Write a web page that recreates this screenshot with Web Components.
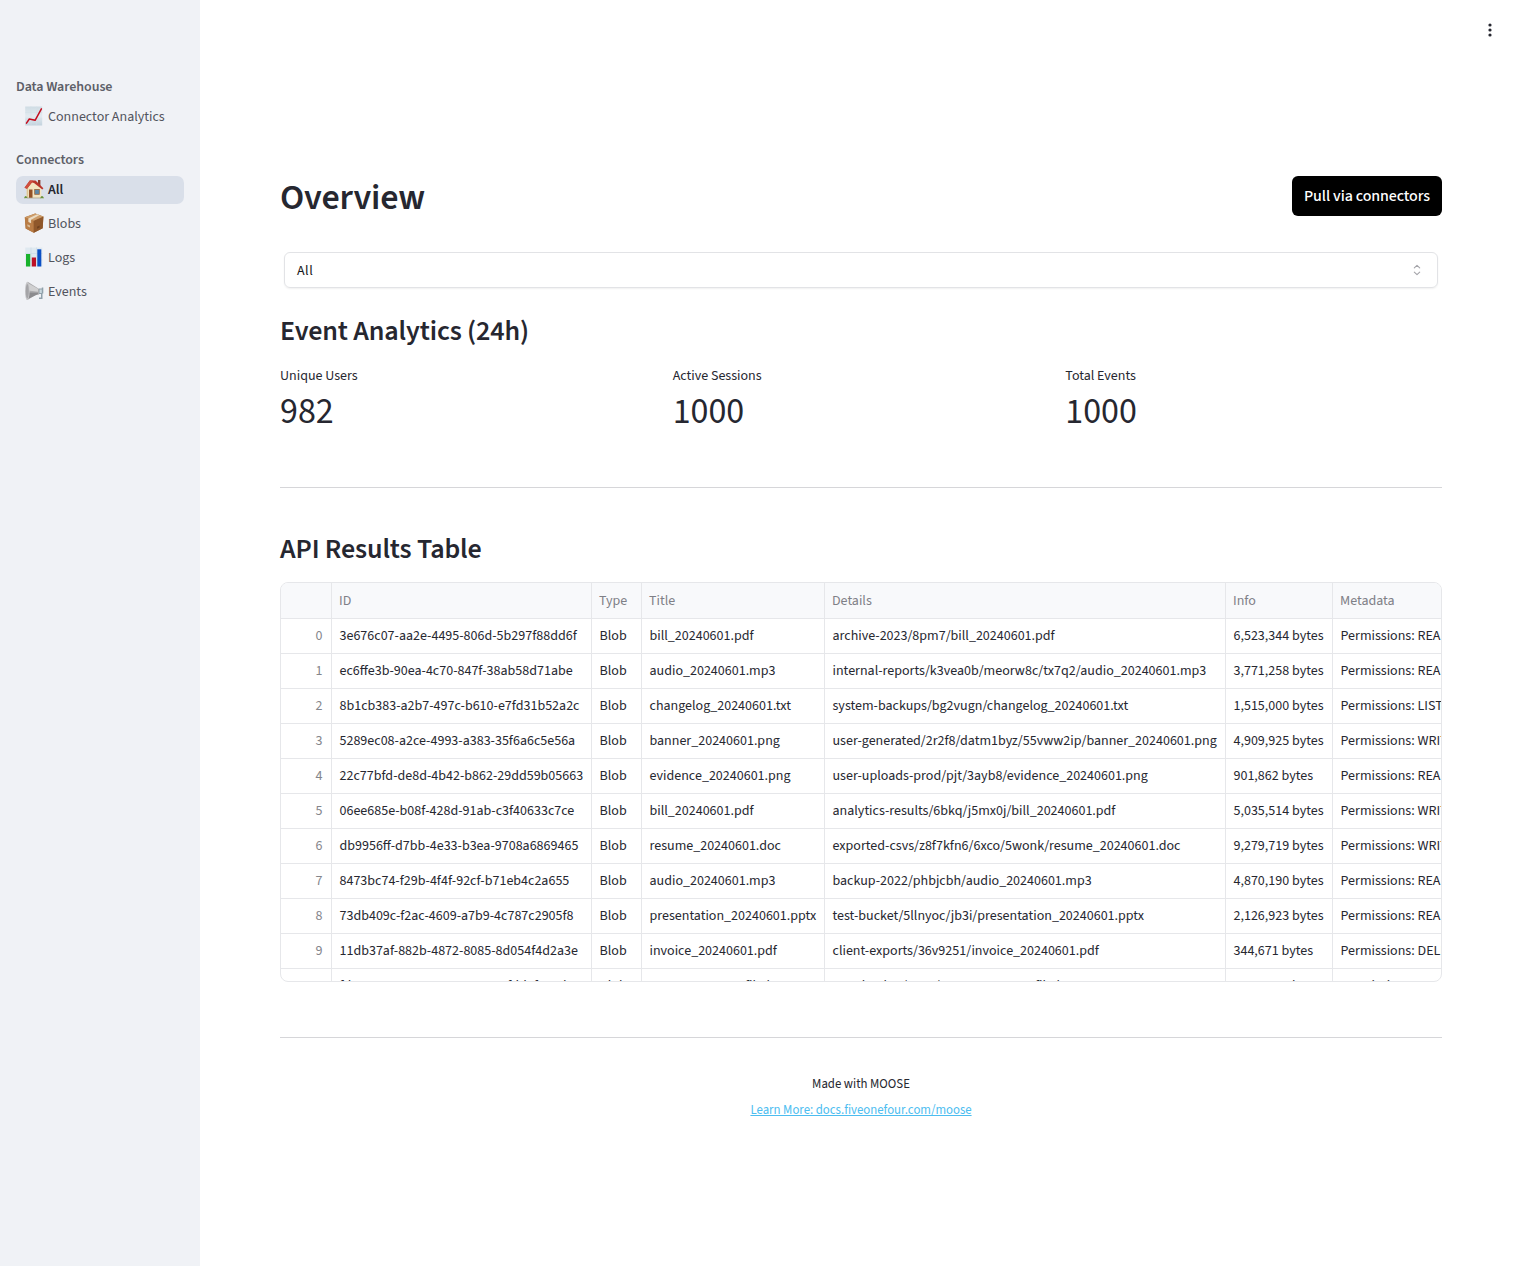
<!DOCTYPE html>
<html lang="en">
<head>
<meta charset="utf-8">
<title>Overview</title>
<style>
body{margin:0;background:#fff;color:#262730;font-family:"Source Sans Pro","Source Sans 3","Noto Sans CJK SC","Noto Sans",sans-serif;font-size:14px;line-height:20px}
</style>
</head>
<body>
<app-shell>
  <nav-sidebar slot="side">
    <nav-group label="Data Warehouse">
      <nav-item icon="chart">Connector Analytics</nav-item>
    </nav-group>
    <nav-group label="Connectors">
      <nav-item icon="house" active>All</nav-item>
      <nav-item icon="box">Blobs</nav-item>
      <nav-item icon="bars">Logs</nav-item>
      <nav-item icon="horn">Events</nav-item>
    </nav-group>
  </nav-sidebar>
  <kebab-menu slot="tool"></kebab-menu>
  <page-head>Overview<action-button slot="action">Pull via connectors</action-button></page-head>
  <select-box>All</select-box>
  <section-title style="--top:25px">Event Analytics (24h)</section-title>
  <metric-row>
    <metric-card label="Unique Users">982</metric-card>
    <metric-card label="Active Sessions">1000</metric-card>
    <metric-card label="Total Events">1000</metric-card>
  </metric-row>
  <rule-line style="--top:51px"></rule-line>
  <section-title style="--top:43px">API Results Table</section-title>
  <data-grid></data-grid>
  <rule-line style="--top:55px"></rule-line>
  <page-foot>Made with MOOSE<a slot="link">Learn More: docs.fiveonefour.com/moose</a></page-foot>
</app-shell>
<script>
const define = (name, html, setup) => customElements.define(name, class extends HTMLElement {
  constructor() {
    super();
    this.attachShadow({ mode: 'open' }).innerHTML = html;
  }
  connectedCallback() { if (setup) setup(this, this.shadowRoot); }
});

define('app-shell', `<style>
:host{display:flex;min-height:1266px}
aside{width:200px;flex:none;background:#f0f2f6;display:flex}
.right{flex:1;min-width:0;display:flex;flex-direction:column}
header{height:60px;display:flex;justify-content:flex-end;align-items:center;padding-right:22px}
main{padding:116px 80px 0;display:flex;flex-direction:column}
</style><aside><slot name="side"></slot></aside><div class="right"><header><slot name="tool"></slot></header><main><slot></slot></main></div>`);

define('kebab-menu', `<style>:host{display:block;width:20px;height:20px}svg{display:block}</style>
<svg width="20" height="20" viewBox="0 0 20 20" fill="#262730"><circle cx="10" cy="5" r="1.600"/><circle cx="10" cy="10" r="1.600"/><circle cx="10" cy="15" r="1.600"/></svg>`);

define('nav-sidebar', `<style>:host{display:flex;flex-direction:column;gap:18px;flex:1;padding:76px 16px 0}</style><slot></slot>`);

define('nav-group', `<style>
:host{display:flex;flex-direction:column}
.label{height:20px;line-height:22px;margin-bottom:7px;font-weight:600;letter-spacing:-.07px;color:#5d5f68}
.items{display:flex;flex-direction:column;gap:6px}
</style><div class="label"></div><div class="items"><slot></slot></div>`, (el, root) => {
  root.querySelector('.label').textContent = el.getAttribute('label');
});

const icons = {
  chart: `<defs><linearGradient id="g" x2="0" y2="1"><stop stop-color="#cfdce4"/><stop offset=".5" stop-color="#e3ebf0"/><stop offset="1" stop-color="#c3d3de"/></linearGradient></defs><rect x="1.2" y=".5" width="17" height="19" fill="url(#g)"/><path d="M7 .5v19M12.700 .5v19M1.200 6.500h17M1.200 13h17" stroke="#d3dfe7" stroke-width=".6"/><path d="M2.500 17.200L5.300 13l5.800 1.300 6.300-11.400" fill="none" stroke="#c40d1e" stroke-width="1.500" stroke-linejoin="round" stroke-linecap="round"/>`,
  house: `<path d="M14 1h2.400v6.500H14z" fill="#8b3a2b"/><path d="M2.700 8l4-5.500 5.300 0L17.300 9v10H2.700z" fill="#f3e4c0"/><path d="M2.700 8.500l1.500-1.500v12H2.700z" fill="#dcc594"/><path d="M.5 8.800L5.800 1.500h5.700l7.900 7.800-1.100 1.200-8.300-6.500L8 3.500 3 9.800z" fill="#b9352a"/><path d="M.5 8.800L5.800 1.500h3.400L3 9.800z" fill="#cf4f3e"/><rect x="5" y="10.500" width="3.500" height="8.500" fill="#935127"/><rect x="10.700" y="10.500" width="4.600" height="4.800" fill="#5c88a8" stroke="#9a6238" stroke-width=".8"/><path d="M0 19.200q1.600-4 3.500-.3zM16 19.200q2-4.600 4 0z" fill="#689239"/><path d="M2.700 18.600h14v.8h-14z" fill="#a9a28c"/>`,
  box: `<path d="M.8 4.300L11.200.4l8.200 3.100-.7 11.700-8.900 4.500-8.100-4.100z" fill="#a46a38"/><path d="M.8 4.300l8.900 3.400.1 12-8.100-4.100z" fill="#b97c45"/><path d="M9.700 7.700l9.700-4.200-.7 11.700-8.900 4.500z" fill="#8f572a"/><path d="M.8 4.300L11.200.4l8.200 3.100-9.700 4.200z" fill="#cc9b68"/><path d="M4.300 5.600l9-4.400 2.300.9-8.500 4.600v3.500l-2.700-1.200z" fill="#eadbc2"/><path d="M3.400 11.200l2.600 1.200v2.200l-2.600-1.300z" fill="#d9bc97"/><path d="M13 13.800l2.600-1.200v1.900l-2.600 1.200z" fill="#70411f"/>`,
  bars: `<rect x="1.300" y=".5" width="17" height="19" fill="#dfe9f0"/><path d="M1.300 6.500h17M1.300 13h17M7 .5v19M12.500 .5v19" stroke="#c9d9e4" stroke-width=".6"/><rect x="2" y="7" width="4.200" height="12.500" fill="#19b22c"/><rect x="7.800" y="10.500" width="4.200" height="9" fill="#bd1025"/><rect x="13.300" y="2.300" width="4" height="17.200" fill="#0b50c5"/>`,
  horn: `<path d="M14.800 7.500h3v-1h1.500v6h-.8v5.500h-3.500v-1.500h2v-3.500h-2.200z" fill="#8fa0aa"/><path d="M15.500 8.500h2.300v3.500h-2.300z" fill="#c9d8df"/><path d="M3.700.8l9.900 6.100 1.500 1v5.600l-3.700.7-7.700 4.600z" fill="#ababad"/><path d="M4 2.300l10 5.500v3L4 9.500z" fill="#d0d0d1"/><path d="M4 11.500l10 .3v1.200L4 18z" fill="#8b8b8e"/><ellipse cx="3.300" cy="9.900" rx="2.300" ry="9.200" fill="#c6c6c8"/><ellipse cx="3.300" cy="10.200" rx="1.500" ry="7.300" fill="#a4a4a7"/>`
};
define('nav-item', `<style>
:host{display:flex;align-items:center;height:28px;padding:0 8px;gap:4px;border-radius:7px;color:#52545d;box-sizing:border-box}
:host([active]){background:#d9dfe9;color:#262730;font-weight:600}
svg{width:20px;height:20px;flex:none;margin-top:-2px}
span{line-height:28px;height:28px;white-space:nowrap}
</style><svg viewBox="0 0 20 20"></svg><span><slot></slot></span>`, (el, root) => {
  root.querySelector('svg').innerHTML = icons[el.getAttribute('icon')];
});

define('page-head', `<style>
:host{display:flex;justify-content:space-between;align-items:flex-start;height:40px;margin-bottom:36px}
h1{margin:0;font-size:36px;line-height:44px;font-weight:600;letter-spacing:-.18px}
</style><h1><slot></slot></h1><slot name="action"></slot>`);

define('action-button', `<style>
:host{display:block}
button{display:block;width:150px;height:40px;border:0;border-radius:6px;background:#000;color:#fff;font-family:inherit;font-size:16px;font-weight:500;letter-spacing:-.1px;line-height:38px;padding:0;white-space:nowrap}
</style><button><slot></slot></button>`);

define('select-box', `<style>
:host{display:flex;align-items:center;justify-content:space-between;height:36px;box-sizing:border-box;margin:0 4px;padding:0 12px;border:1px solid #e2e3e6;border-radius:6px;box-shadow:0 1px 2px rgba(0,0,0,.06);color:#18181b}
span{line-height:34px;padding-top:2px;letter-spacing:.5px}
svg{display:block}
</style><span><slot></slot></span><svg width="16" height="16" viewBox="0 0 16 16" fill="none" stroke="#a3a3a8" stroke-width="1.100" stroke-linecap="round" stroke-linejoin="round"><path d="M5.300 5.900l2.700-2.500 2.700 2.500M5.300 10.100l2.700 2.500 2.700-2.500"/></svg>`);

define('section-title', `<style>
:host{display:block;margin-top:var(--top)}
h2{margin:0;font-size:28px;line-height:36px;height:36px;font-weight:600;letter-spacing:-.14px}
</style><h2><slot></slot></h2>`);

define('metric-row', `<style>:host{display:grid;grid-template-columns:repeat(3,1fr);column-gap:16px;margin-top:16px;height:71px}</style><slot></slot>`);

define('metric-card', `<style>
:host{display:block}
.label{line-height:22px;height:20px}
.value{font-size:36px;line-height:54px;height:50px}
</style><div class="label"></div><div class="value"><slot></slot></div>`, (el, root) => {
  root.querySelector('.label').textContent = el.getAttribute('label');
});

define('rule-line', `<style>:host{display:block;height:1px;background:#d6d6d9;margin-top:var(--top)}</style>`);

const rows = [
  ['3e676c07-aa2e-4495-806d-5b297f88dd6f','bill_20240601.pdf','archive-2023/8pm7/bill_20240601.pdf','6,523,344','READ'],
  ['ec6ffe3b-90ea-4c70-847f-38ab58d71abe','audio_20240601.mp3','internal-reports/k3vea0b/meorw8c/tx7q2/audio_20240601.mp3','3,771,258','READ'],
  ['8b1cb383-a2b7-497c-b610-e7fd31b52a2c','changelog_20240601.txt','system-backups/bg2vugn/changelog_20240601.txt','1,515,000','LIST'],
  ['5289ec08-a2ce-4993-a383-35f6a6c5e56a','banner_20240601.png','user-generated/2r2f8/datm1byz/55vww2ip/banner_20240601.png','4,909,925','WRITE'],
  ['22c77bfd-de8d-4b42-b862-29dd59b05663','evidence_20240601.png','user-uploads-prod/pjt/3ayb8/evidence_20240601.png','901,862','READ'],
  ['06ee685e-b08f-428d-91ab-c3f40633c7ce','bill_20240601.pdf','analytics-results/6bkq/j5mx0j/bill_20240601.pdf','5,035,514','WRITE'],
  ['db9956ff-d7bb-4e33-b3ea-9708a6869465','resume_20240601.doc','exported-csvs/z8f7kfn6/6xco/5wonk/resume_20240601.doc','9,279,719','WRITE'],
  ['8473bc74-f29b-4f4f-92cf-b71eb4c2a655','audio_20240601.mp3','backup-2022/phbjcbh/audio_20240601.mp3','4,870,190','READ'],
  ['73db409c-f2ac-4609-a7b9-4c787c2905f8','presentation_20240601.pptx','test-bucket/5llnyoc/jb3i/presentation_20240601.pptx','2,126,923','READ'],
  ['11db37af-882b-4872-8085-8d054f4d2a3e','invoice_20240601.pdf','client-exports/36v9251/invoice_20240601.pdf','344,671','DELETE'],
  ['fd298115-ac10-4287-8766-2efdd0f625d7','scene_5678_profile.k','user-bucket/1161/scene_5678_profile.k','3,873,335','MODIFY']
];
define('data-grid', `<style>
:host{display:block;margin-top:15px;height:400px;box-sizing:border-box;border:1px solid #e6e7ea;border-radius:8px;overflow:hidden}
.row{display:grid;grid-template-columns:51px 260px 50px 183px 401px 107px 108px;height:35px}
.cell{box-sizing:border-box;border-right:1px solid #e6e7ea;border-bottom:1px solid #e6e7ea;padding-left:7.500px;overflow:hidden;white-space:nowrap;line-height:34px}
.cell:last-child{border-right:0}
.cell:first-child{text-align:right;padding:0 8.500px 0 0;color:#84858b}
.head{height:36px}
.head .cell{background:#f8f9fb;color:#7f8087;padding-left:7px;line-height:36px}
</style><div class="body"></div>`, (el, root) => {
  const line = (cells, cls) => `<div class="row ${cls}">${cells.map(c => `<div class="cell">${c}</div>`).join('')}</div>`;
  root.querySelector('.body').innerHTML =
    line(['', 'ID', 'Type', 'Title', 'Details', 'Info', 'Metadata'], 'head') +
    rows.map((r, i) => line([i, r[0], 'Blob', r[1], r[2], r[3] + ' bytes', 'Permissions: ' + r[4]], '')).join('');
});

define('page-foot', `<style>
:host{display:flex;flex-direction:column;align-items:center;margin-top:36px;font-size:12.800px;line-height:20px}
::slotted(a){margin-top:6px;color:#4cbdf0;text-decoration:underline}
</style><div><slot></slot></div><slot name="link"></slot>`);
</script>
</body>
</html>
